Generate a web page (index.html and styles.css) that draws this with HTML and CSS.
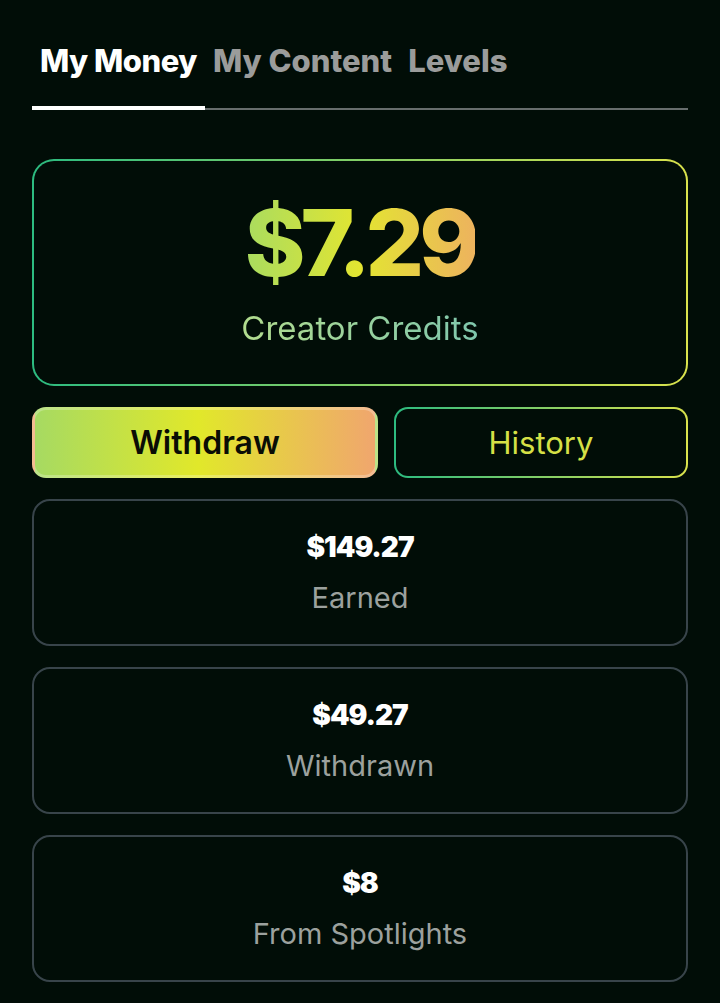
FILE: index.html
```html
<!DOCTYPE html>
<html lang="en">
<head>
<meta charset="UTF-8">
<title>My Money</title>
<link rel="stylesheet" href="styles.css">
</head>
<body>
<div class="page">
	<ul class="tabs">
		<li class="tab active">My Money</li>
		<li class="tab">My Content</li>
		<li class="tab">Levels</li>
	</ul>

	<div class="credits">
		<p class="credits-amount">$7.29</p>
		<p class="credits-label">Creator Credits</p>
	</div>

	<div class="actions">
		<button class="btn btn-withdraw">Withdraw</button>
		<button class="btn btn-history"><span>History</span></button>
	</div>

	<div class="stat">
		<p class="stat-value">$149.27</p>
		<p class="stat-label">Earned</p>
	</div>
	<div class="stat">
		<p class="stat-value">$49.27</p>
		<p class="stat-label">Withdrawn</p>
	</div>
	<div class="stat">
		<p class="stat-value">$8</p>
		<p class="stat-label">From Spotlights</p>
	</div>
</div>
</body>
</html>
```

FILE: styles.css
```css
* {margin:0; padding:0; box-sizing:border-box;}
li {list-style:none;}
html, body {background:#010d07;}
body {font-family:Inter, "Noto Sans", sans-serif; color:#fff;}

.page {padding:43px 32px 20px;}

.tabs {display:flex; border-bottom:2px solid #676d6d;}
.tab {padding:0 8px 27px; font-size:31px; font-weight:800; letter-spacing:-0.5px; color:#9b9c9b; margin-bottom:-2px; border-bottom:4px solid transparent; line-height:36px;}
.tab + .tab {letter-spacing:0;}
.tab.active {color:#fff; border-bottom-color:#fff;}

.credits {margin-top:49px; height:227px; border:2px solid transparent; border-radius:22px;
	background:linear-gradient(#010d07, #010d07) padding-box, linear-gradient(90deg, #2cbb80, #d9e24c) border-box;
	display:flex; flex-direction:column; align-items:center; justify-content:center;}
.credits-amount {font-size:92px; font-weight:800; letter-spacing:-5px; line-height:100px; margin-top:-6px;
	background:linear-gradient(90deg, #a9dc5f, #e3e531 50%, #edb35e); -webkit-background-clip:text; background-clip:text; color:transparent;}
.credits-label {margin-top:16px; font-size:33px; font-weight:400; line-height:38px;
	background:linear-gradient(90deg, #b2dc8e, #7fc7ad); -webkit-background-clip:text; background-clip:text; color:transparent;}

.actions {display:grid; grid-template-columns:346fr 294fr; gap:16px; margin-top:21px;}
.btn {height:71px; border-radius:14px; font-family:Inter, "Noto Sans", sans-serif; font-size:31px; font-weight:400; cursor:pointer;}
.btn-withdraw {color:#0a0d05; font-size:32px; font-weight:600; border:3px solid rgba(255,255,255,0.25);
	background:linear-gradient(90deg, #a6da62, #e1e82a 48%, #f0a66e);}
.btn-history {border:2px solid transparent;
	background:linear-gradient(#010d07, #010d07) padding-box, linear-gradient(90deg, #2cbb80, #d9e24c) border-box;}
.btn-history span {color:#d6e046;}

.stat {margin-top:21px; height:147px; border:2px solid #38444a; border-radius:18px;
	display:flex; flex-direction:column; align-items:center; justify-content:center;}
.stat-value {font-size:28px; font-weight:900; letter-spacing:-1px; line-height:32px;}
.stat-label {margin-top:18px; font-size:29px; color:#9ca19e; line-height:34px;}
```
